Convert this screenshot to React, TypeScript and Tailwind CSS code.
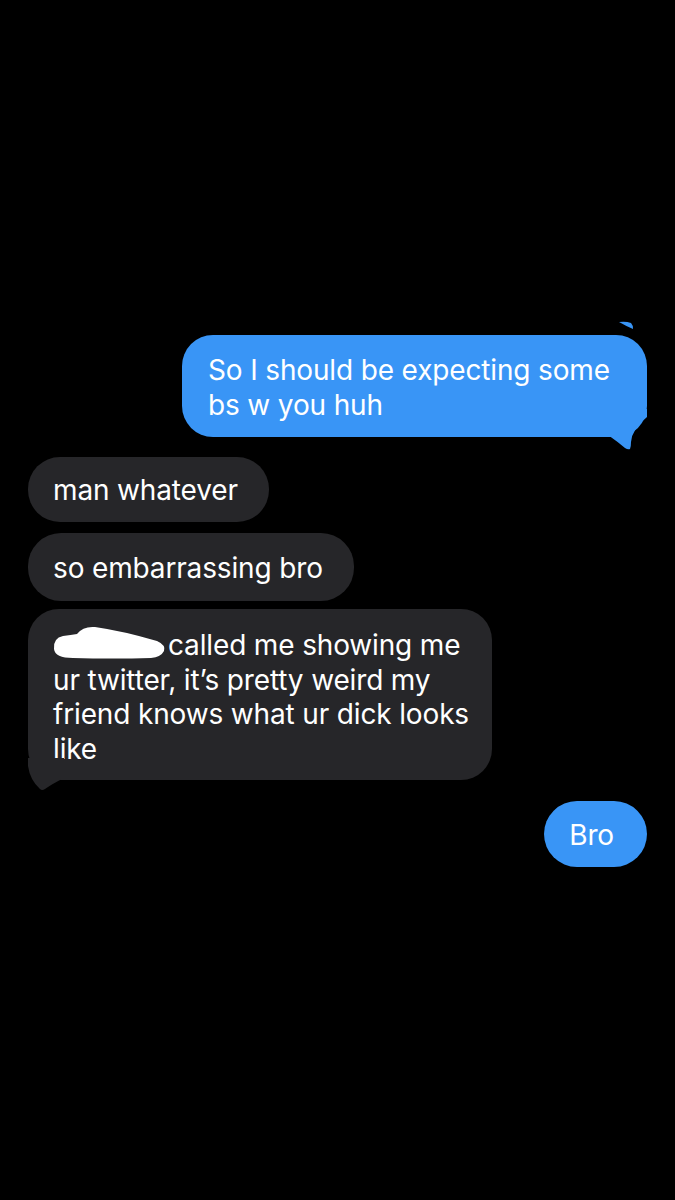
import React from "react";

const BLUE = "bg-[#3995f6]";
const GRAY = "bg-[#262629]";

export default function App() {
  return (
    <div
      className="relative min-h-[1200px] w-full bg-black px-[28px] pt-[335px] text-white antialiased"
      style={{ fontFamily: "Inter, 'Open Sans', sans-serif" }}
    >
      {/* tail of the previous (cut off) message */}
      <svg className="absolute left-[618px] top-[320px]" width="16" height="10" viewBox="0 0 16 10">
        <path d="M1 2 Q 8 1 13 3 Q 15 5 15 9 Q 8 6 1 2 Z" fill="#3995f6" />
      </svg>

      <div className="flex flex-col">
        {/* sent */}
        <div className="relative self-end">
          <div className={`${BLUE} w-[465px] rounded-[31px] pl-[26px] pr-[30px] pt-[18px] pb-[14px] text-[28px] leading-[35px] tracking-[-0.15px]`}>
            <span className="block">So I should be expecting some</span>
            <span className="block">bs w you huh</span>
          </div>
          <Tail side="right" color="#3995f6" />
        </div>

        {/* received */}
        <div className="mt-[20px] flex flex-col items-start">
          <div className={`${GRAY} rounded-[32px] pl-[25px] pr-[31px] pt-[16px] pb-[14px] text-[28px] leading-[35px] tracking-[-0.15px]`}>
            man whatever
          </div>
          <div className={`${GRAY} mt-[11px] rounded-[33px] pl-[25px] pr-[31px] pt-[18px] pb-[15px] text-[28px] leading-[35px] tracking-[-0.15px]`}>
            so embarrassing bro
          </div>
          <div className="relative mt-[8px]">
            <div className={`${GRAY} w-[464px] rounded-[31px] pl-[25px] pr-[20px] pt-[19px] pb-[14px] text-[28px] leading-[34.5px] tracking-[-0.15px]`}>
              <span className="block">
                <Redacted />
                called me showing me
              </span>
              <span className="block">ur twitter, it’s pretty weird my</span>
              <span className="block">friend knows what ur dick looks</span>
              <span className="block">like</span>
            </div>
            <Tail side="left" color="#262629" />
          </div>
        </div>

        {/* sent */}
        <div className="relative mt-[21px] self-end">
          <div className={`${BLUE} rounded-[33px] pl-[25px] pr-[33px] pt-[16px] pb-[14px] text-[28px] leading-[36px] tracking-[-0.15px]`}>
            Bro
          </div>
        </div>
      </div>
    </div>
  );
}

function Tail({ side, color }: { side: "left" | "right"; color: string }) {
  if (side === "right") {
    return (
      <svg className="absolute bottom-[-14px] right-0" width="45" height="42" viewBox="0 0 45 42">
        <path
          d="M45 0 L45 8 Q 30 20 29 33 Q 29 38 28 40 Q 26 41 23 39 Q 16 33 6 26 L 6 0 Z"
          fill={color}
        />
      </svg>
    );
  }
  return (
    <svg className="absolute bottom-[-12px] left-0" width="45" height="34" viewBox="0 0 45 34">
      <path
        d="M0 0 L0 8 Q 2 22 12 31 Q 14 33 17 31 Q 24 26 36 20 L 36 0 Z"
        fill={color}
      />
    </svg>
  );
}

function Redacted() {
  return (
    <span className="relative mr-[2px] inline-block h-[1px] w-[113px]">
      <svg className="absolute left-0 top-[-29px]" width="113" height="36" viewBox="0 0 113 36">
        <path
          d="M1 24 Q 0 13 10 11 Q 18 10 24 9 Q 30 1 42 2 Q 70 6 104 16 Q 113 20 111 26 Q 108 32 98 33 Q 60 34 20 33 Q 2 33 1 24 Z"
          fill="#ffffff"
        />
      </svg>
    </span>
  );
}
